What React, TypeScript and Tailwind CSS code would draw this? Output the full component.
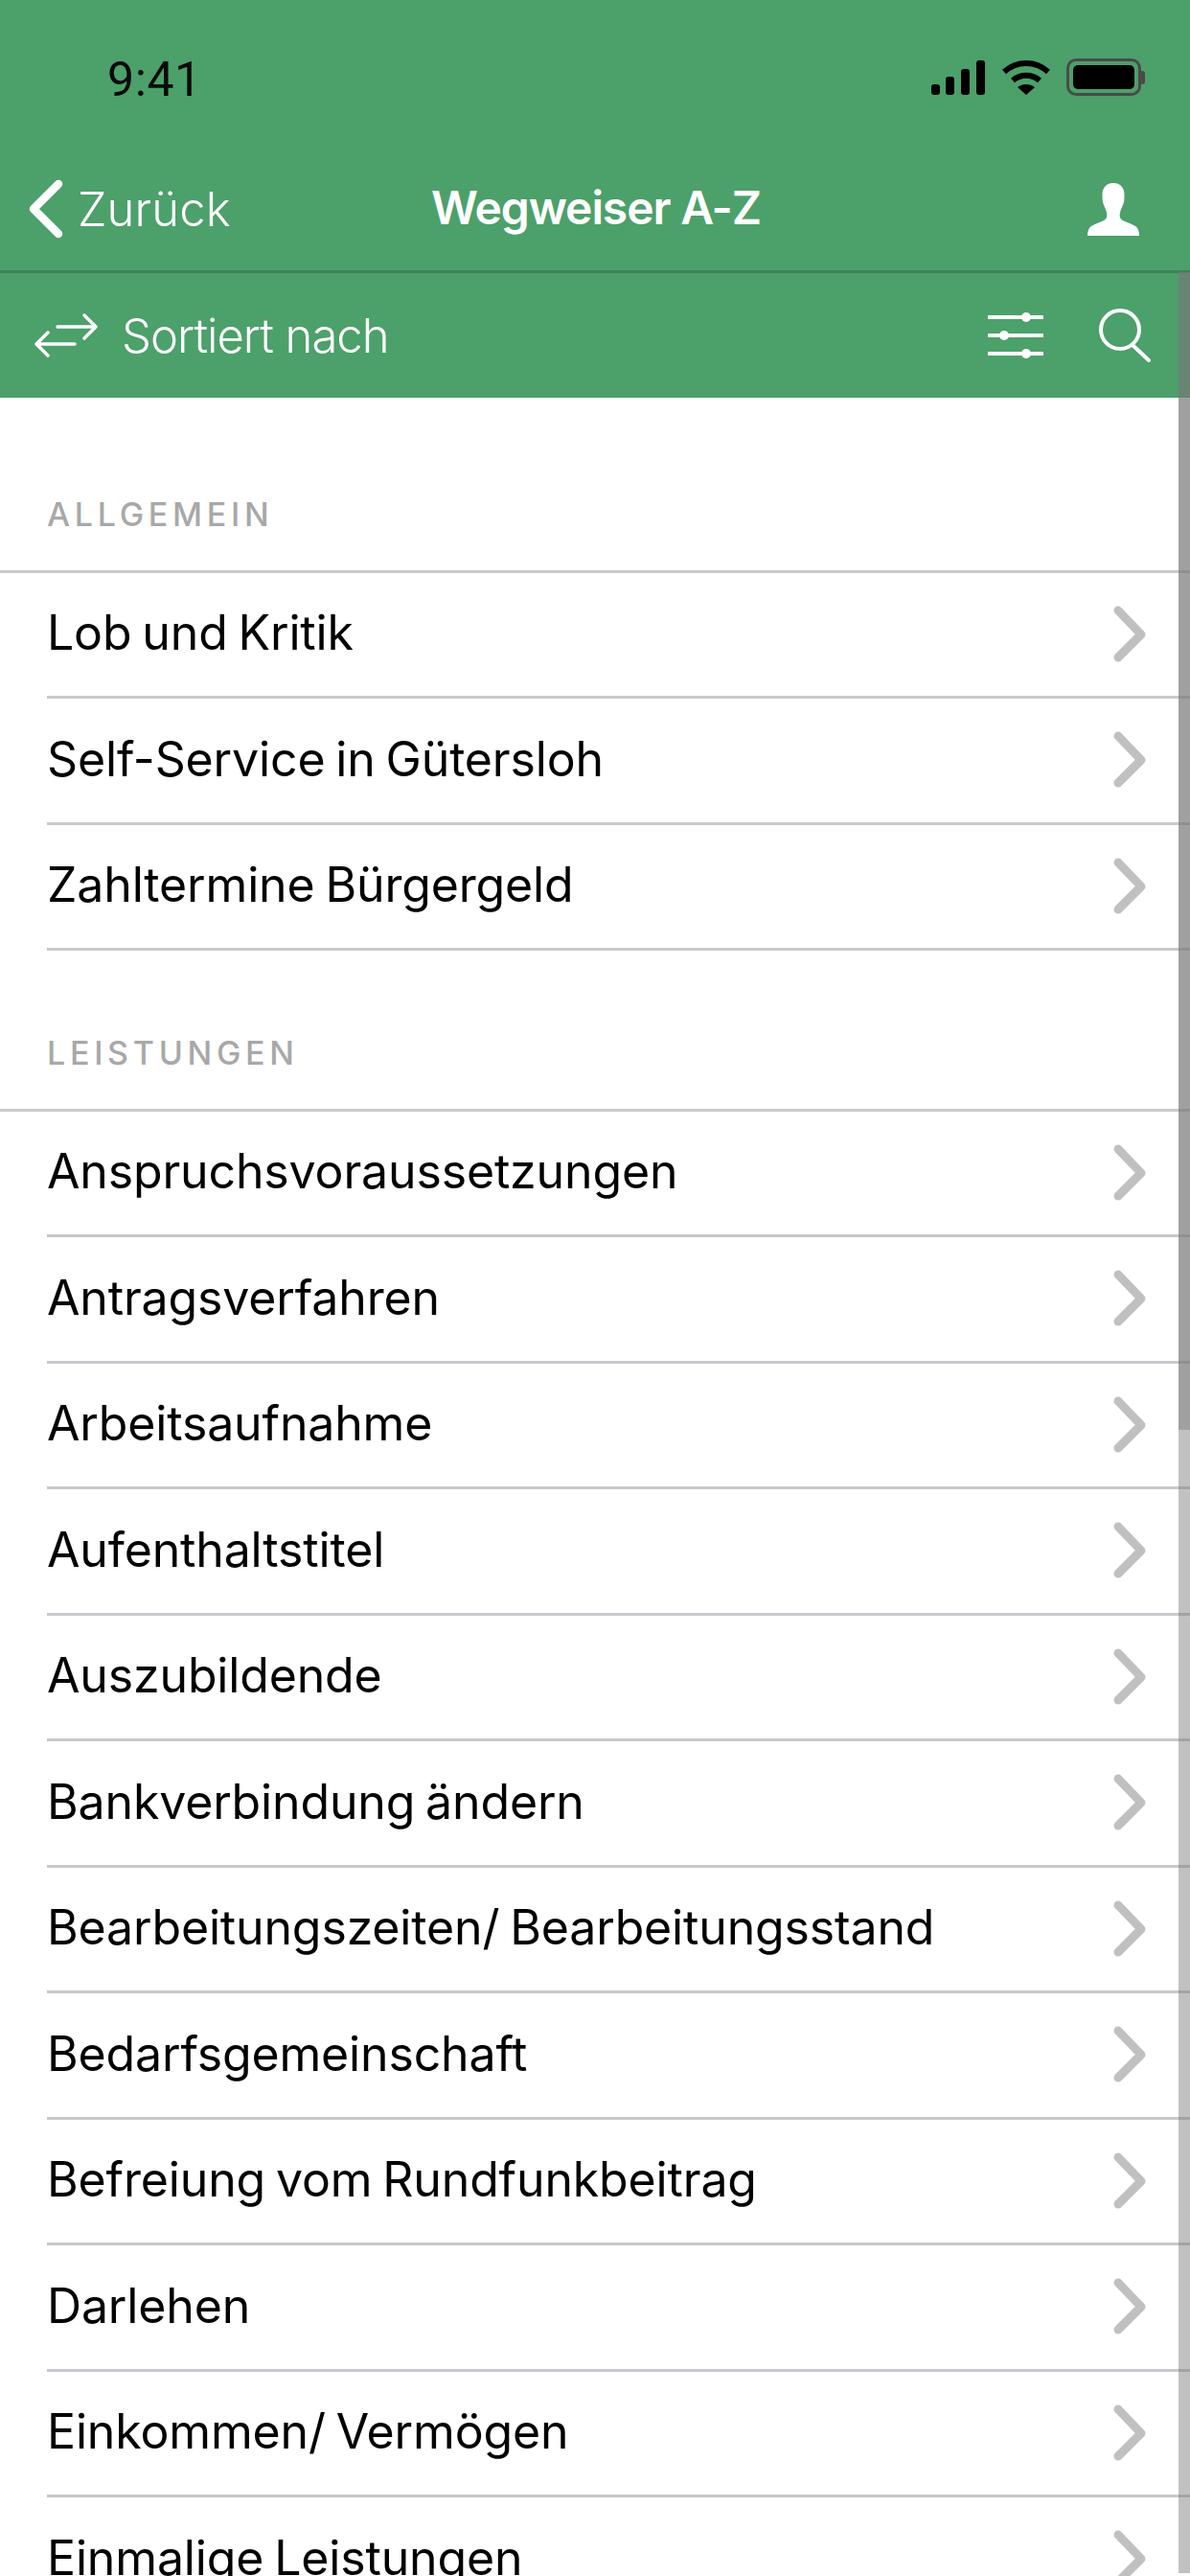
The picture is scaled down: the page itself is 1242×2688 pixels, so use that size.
import React from "react";

const FONT = { inter: "font-['Inter','Liberation_Sans',sans-serif]", roboto: "font-['Roboto','Liberation_Sans',sans-serif]" };

function Chevron() {
  return (
    <svg width="44" height="64" viewBox="0 0 44 64" className="mr-[42px] shrink-0" fill="none">
      <path d="M11 7 L35 32 L11 56" stroke="#c0c0c0" strokeWidth="9" strokeLinecap="round" strokeLinejoin="round" />
    </svg>
  );
}

function Row({ label }: { label: string }) {
  return (
    <div className="ml-[49px] h-[131.5px] shrink-0 flex items-center justify-between border-b-[3px] border-[#c8c8ce]">
      <span className={"text-[50px] text-black leading-none tracking-[-0.15px] [word-spacing:-3px] pb-[3px] " + FONT.inter}>{label}</span>
      <Chevron />
    </div>
  );
}

function Section({ title, className }: { title: string; className: string }) {
  return (
    <div className={"flex items-end pl-[49px] pb-[41px] border-b-[3px] border-[#c8c8ce] " + className}>
      <span className={"text-[34px] leading-none font-medium tracking-[4.7px] text-[#a8a8a8] " + FONT.inter}>{title}</span>
    </div>
  );
}

function StatusIcons() {
  return (
    <div className="flex items-center">
      <svg width="56" height="36" viewBox="0 0 56 36" fill="#000">
        <rect x="0" y="25" width="9" height="11" rx="3" />
        <rect x="15" y="17" width="9" height="19" rx="3" />
        <rect x="31" y="9" width="9" height="27" rx="3" />
        <rect x="47" y="0" width="9" height="36" rx="3" />
      </svg>
      <svg width="50" height="38" viewBox="0 0 50 38" className="ml-[18px]" fill="none" stroke="#000" strokeWidth="6">
        <path d="M2 13 C15 1 35 1 48 13" />
        <path d="M11 22 C19 15 31 15 39 22" />
        <path d="M25 37 L16 29 C21 25 29 25 34 29 Z" fill="#000" stroke="none" />
      </svg>
      <div className="ml-[17px] flex items-center">
        <div className="w-[78px] h-[39px] rounded-[10px] border-[3px] border-[#4a4a4a] p-[4px]">
          <div className="w-full h-full bg-black rounded-[5px]" />
        </div>
        <div className="w-[4px] h-[14px] bg-[#4a4a4a] rounded-r-[3px]" />
      </div>
    </div>
  );
}

export default function App() {
  const general = ["Lob und Kritik", "Self-Service in Gütersloh", "Zahltermine Bürgergeld"];
  const services = [
    "Anspruchsvoraussetzungen",
    "Antragsverfahren",
    "Arbeitsaufnahme",
    "Aufenthaltstitel",
    "Auszubildende",
    "Bankverbindung ändern",
    "Bearbeitungszeiten/ Bearbeitungsstand",
    "Bedarfsgemeinschaft",
    "Befreiung vom Rundfunkbeitrag",
    "Darlehen",
    "Einkommen/ Vermögen",
    "Einmalige Leistungen",
  ];
  return (
    <div className="relative w-[1242px] h-[2688px] overflow-hidden bg-white">
      <header className="bg-[#4ca06a] text-white">
        <div className="h-[160px] flex items-end justify-between pl-[112px] pr-[47px] pb-[60px]">
          <span className={"text-[50px] leading-[40px] translate-y-[3px] tracking-[0.6px] text-[#0b0b0b] " + FONT.roboto}>9:41</span>
          <StatusIcons />
        </div>
        <div className="relative h-[122px] flex items-start justify-between pl-[30px] pr-[53px] pt-[27px]">
          <div className="flex items-center">
            <svg width="36" height="62" viewBox="0 0 36 62" fill="none">
              <path d="M31 5 L5 31 L31 57" stroke="#fff" strokeWidth="8.5" strokeLinecap="round" strokeLinejoin="round" />
            </svg>
            <span className={"ml-[15px] text-[49px] leading-none font-light tracking-[0.1px] " + FONT.inter}>Zurück</span>
          </div>
          <span className={"absolute left-[450px] top-[33px] text-[48px] leading-none font-semibold tracking-[-1.1px] " + FONT.inter}>Wegweiser A-Z</span>
          <svg width="54" height="55" viewBox="0 0 54 55" fill="#fff" className="mt-[4px]">
            <path d="M27 0 C36 0 39 7 38.5 14 C38.5 18 38 21 36.5 24 C35 28 33 31 34 36 C35 40 44 41 50 45 C53 47 54 51 54 55 L0 55 C0 51 1 47 4 45 C10 41 19 40 20 36 C21 31 19 28 17.5 24 C16 21 15.5 18 15.5 14 C15 7 18 0 27 0 Z" />
          </svg>
        </div>
        <div className="h-[3px] bg-[#3f8259]" />
        <div className="h-[130px] flex items-center justify-between pl-[36px] pr-[41px]">
          <div className="flex items-center">
            <svg width="66" height="46" viewBox="0 0 66 46" fill="none" stroke="#fff" strokeWidth="3.5" strokeLinecap="round" strokeLinejoin="round">
              <path d="M24 14 L63 14 M52 2 L64 14 L52 26" />
              <path d="M42 32 L3 32 M14 20 L2 32 L14 44" />
            </svg>
            <span className={"ml-[25px] text-[49px] leading-none font-light tracking-[-1px] " + FONT.inter}>Sortiert nach</span>
          </div>
          <div className="flex items-center">
            <svg width="58" height="50" viewBox="0 0 58 50" fill="none" stroke="#fff" strokeWidth="4" strokeLinecap="round">
              <path d="M1 6 L57 6 M1 25 L57 25 M1 44 L57 44" />
              <circle cx="40" cy="6" r="5" fill="#fff" stroke="none" />
              <circle cx="17" cy="25" r="5" fill="#fff" stroke="none" />
              <circle cx="40" cy="44" r="5" fill="#fff" stroke="none" />
            </svg>
            <svg width="54" height="56" viewBox="0 0 54 56" fill="none" stroke="#fff" strokeWidth="4" strokeLinecap="round" className="ml-[58px]">
              <circle cx="22" cy="22" r="20" />
              <path d="M35 38 L52 54" />
            </svg>
          </div>
        </div>
      </header>
      <main className="flex flex-col">
        <Section title="ALLGEMEIN" className="h-[182.5px]" />
        {general.map((label) => (
          <Row key={label} label={label} />
        ))}
        <Section title="LEISTUNGEN" className="h-[167.5px]" />
        {services.map((label) => (
          <Row key={label} label={label} />
        ))}
      </main>
      <div className="absolute right-0 top-[284px] w-[12px] h-[2401px] flex flex-col">
        <div className="h-[1208px] bg-[#777777]/70" />
        <div className="flex-1 bg-[#777777]/46" />
      </div>
    </div>
  );
}
